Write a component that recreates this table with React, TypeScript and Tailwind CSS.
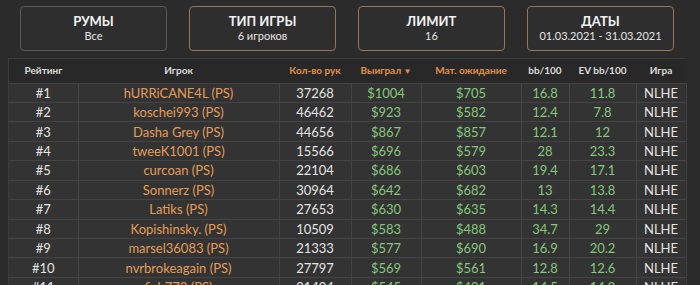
const FILTERS = [
  { title: "РУМЫ", value: "Все", active: false },
  { title: "ТИП ИГРЫ", value: "6 игроков", active: true },
  { title: "ЛИМИТ", value: "16", active: true },
  { title: "ДАТЫ", value: "01.03.2021 - 31.03.2021", active: true },
];

type Row = [string, string, string, string, string, string, string];

const ROWS: Row[] = [
  ["#1", "hURRiCANE4L (PS)", "37268", "$1004", "$705", "16.8", "11.8"],
  ["#2", "koschei993 (PS)", "46462", "$923", "$582", "12.4", "7.8"],
  ["#3", "Dasha Grey (PS)", "44656", "$867", "$857", "12.1", "12"],
  ["#4", "tweeK1001 (PS)", "15566", "$696", "$579", "28", "23.3"],
  ["#5", "curcoan (PS)", "22104", "$686", "$603", "19.4", "17.1"],
  ["#6", "Sonnerz (PS)", "30964", "$642", "$682", "13", "13.8"],
  ["#7", "Latiks (PS)", "27653", "$630", "$635", "14.3", "14.4"],
  ["#8", "Kopishinsky. (PS)", "10509", "$583", "$488", "34.7", "29"],
  ["#9", "marsel36083 (PS)", "21333", "$577", "$690", "16.9", "20.2"],
  ["#10", "nvrbrokeagain (PS)", "27797", "$569", "$561", "12.8", "12.6"],
  ["#11", "fish773 (PS)", "21404", "$545", "$491", "14.5", "14.0"],
];

const COLS = [69, 201, 72, 70, 100, 48, 67, 50];

export default function App() {
  return (
    <div className="w-[700px] h-[285px] overflow-hidden bg-[#2b2b2b] font-['Lato',sans-serif]">
      <div className="flex gap-[22px] pl-[20px] pt-[6px]">
        {FILTERS.map((f) => (
          <div key={f.title}
            className={`w-[147px] h-[45px] rounded-[4px] border flex flex-col items-center justify-center bg-[#2e2e2e] ${f.active ? "border-[#9c7453]" : "border-[#5a5a5a]"}`}>
            <div className="text-[13px] leading-[15px] font-bold text-[#f2f2f2]">{f.title}</div>
            <div className="text-[11px] leading-[14px] text-[#e6e6e6]">{f.value}</div>
          </div>
        ))}
      </div>

      <div className="ml-[8px] mt-[7px] w-[677px] bg-[#333333] border-l border-t border-[#3c3c3c]">
        <table className="table-fixed border-collapse w-[677px]">
          <colgroup>
            {COLS.map((w, i) => <col key={i} style={{ width: w }} />)}
          </colgroup>
          <thead className="bg-[#282828] text-[10px] font-bold">
            <tr className="h-[24px]">
              <th className="text-[#dcdcdc] font-bold">Рейтинг</th>
              <th className="text-[#dcdcdc] font-bold">Игрок</th>
              <th className="text-[#e0914c] font-bold">Кол-во рук</th>
              <th className="text-[#e0914c] font-bold">Выиграл <span className="text-[8px]">▼</span></th>
              <th className="text-[#e0914c] font-bold">Мат. ожидание</th>
              <th className="text-[#dcdcdc] font-bold">bb/100</th>
              <th className="text-[#dcdcdc] font-bold">EV bb/100</th>
              <th className="text-[#dcdcdc] font-bold">Игра</th>
            </tr>
          </thead>
          <tbody className="text-[13px] leading-[16px]">
            {ROWS.map((r) => (
              <tr key={r[0]} className="h-[19.45px] border-t border-[#444444] text-center">
                <td className="p-0 text-[#e4e4e4] border-r border-[#444444]">{r[0]}</td>
                <td className="p-0 text-[#e39d5a] border-r border-[#444444]">{r[1]}</td>
                <td className="p-0 text-[#e4e4e4] border-r border-[#444444]">{r[2]}</td>
                <td className="p-0 text-[#86c77c] border-r border-[#444444]">{r[3]}</td>
                <td className="p-0 text-[#86c77c] border-r border-[#444444]">{r[4]}</td>
                <td className="p-0 text-[#86c77c] border-r border-[#444444]">{r[5]}</td>
                <td className="p-0 text-[#86c77c] border-r border-[#444444]">{r[6]}</td>
                <td className="p-0 text-[#e4e4e4] border-r border-[#444444]">NLHE</td>
              </tr>
            ))}
          </tbody>
        </table>
      </div>
    </div>
  );
}
